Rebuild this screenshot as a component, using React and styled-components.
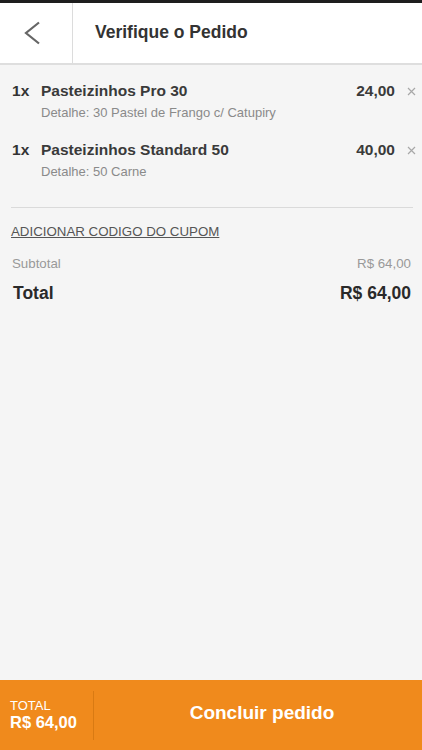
import styled, { createGlobalStyle } from 'styled-components'

const items = [
   { id: 1, qty: 1, name: 'Pasteizinhos Pro 30', detail: 'Detalhe: 30 Pastel de Frango c/ Catupiry', price: '24,00' },
   { id: 2, qty: 1, name: 'Pasteizinhos Standard 50', detail: 'Detalhe: 50 Carne', price: '40,00' },
]

export default function App() {
   return <Page>
      <Global />
      <TopStrip />
      <Header>
         <BackButton aria-label="Voltar">
            <svg width="18" height="24" viewBox="0 0 18 24">
               <polyline points="15,1.5 2,12 15,22.5" fill="none" stroke="#666" strokeWidth="2.2" />
            </svg>
         </BackButton>
         <Title>Verifique o Pedido</Title>
      </Header>

      <Content>
         <ItemList>
            {items.map((item) => (
               <Item key={item.id}>
                  <Qty>{item.qty}x</Qty>
                  <Info>
                     <Name>{item.name}</Name>
                     <Detail>{item.detail}</Detail>
                  </Info>
                  <Price>{item.price}</Price>
                  <Remove aria-label="Remover">
                     <svg width="9" height="9" viewBox="0 0 9 9">
                        <path d="M1 1 L8 8 M8 1 L1 8" stroke="#a8a8a8" strokeWidth="1.2" />
                     </svg>
                  </Remove>
               </Item>
            ))}
         </ItemList>

         <Separator />

         <CouponLink href="#">ADICIONAR CODIGO DO CUPOM</CouponLink>

         <SummaryRow>
            <span>Subtotal</span>
            <span>R$ 64,00</span>
         </SummaryRow>
         <SummaryRow $total>
            <span>Total</span>
            <span>R$ 64,00</span>
         </SummaryRow>
      </Content>

      <Footer>
         <FooterTotal>
            <small>TOTAL</small>
            <strong>R$ 64,00</strong>
         </FooterTotal>
         <FooterDivider />
         <ConfirmButton>Concluir pedido</ConfirmButton>
      </Footer>
   </Page>
}

const Global = createGlobalStyle`
   html, body {
      margin: 0;
      padding: 0;
      background: #f5f5f5;
   }
   * { box-sizing: border-box; }
`

const Page = styled.div`
   width: 422px;
   height: 750px;
   display: flex;
   flex-direction: column;
   background: #f5f5f5;
   font-family: "Liberation Sans", Arial, sans-serif;
   color: #333;
   overflow: hidden;`

const TopStrip = styled.div`
   height: 3px;
   background: #1e1e1e;`

const Header = styled.header`
   height: 62px;
   display: flex;
   align-items: stretch;
   background: #fff;
   border-bottom: 2px solid #dedede;`

const BackButton = styled.button`
   width: 73px;
   border: none;
   border-right: 1px solid #dcdcdc;
   background: transparent;
   display: flex;
   align-items: center;
   padding: 0 0 0 24px;`

const Title = styled.h1`
   margin: 0 0 0 22px;
   align-self: center;
   font-size: 17.5px;
   font-weight: bold;
   color: #333;
   padding-bottom: 2px;`

const Content = styled.main`
   flex: 1;
   padding: 0 6px 0 11px;
   display: flex;
   flex-direction: column;`

const ItemList = styled.div`
   display: flex;
   flex-direction: column;
   gap: 20px;
   padding-top: 17px;`

const Item = styled.div`
   display: flex;
   align-items: flex-start;`

const Qty = styled.span`
   width: 30px;
   padding-left: 1px;
   font-size: 15.5px;
   line-height: 18px;
   font-weight: bold;
   color: #333;`

const Info = styled.div`
   flex: 1;
   display: flex;
   flex-direction: column;
   gap: 5px;`

const Name = styled.span`
   font-size: 15.5px;
   line-height: 18px;
   font-weight: bold;
   color: #3a3a3a;`

const Detail = styled.span`
   font-size: 13px;
   line-height: 16px;
   color: #8a8a8a;`

const Price = styled.span`
   font-size: 15.5px;
   line-height: 18px;
   font-weight: bold;
   color: #3a3a3a;`

const Remove = styled.button`
   width: 21px;
   height: 18px;
   border: none;
   background: transparent;
   padding: 0 0 0 12px;
   display: flex;
   align-items: center;`

const Separator = styled.hr`
   margin: 27px 0 0 0;
   border: none;
   border-top: 1.5px solid #dadada;
   width: 402px;`

const CouponLink = styled.a`
   margin-top: 16px;
   font-size: 13.3px;
   line-height: 16px;
   color: #555;
   text-decoration: underline;
   align-self: flex-start;`

const SummaryRow = styled.div`
   display: flex;
   justify-content: space-between;
   padding: 0 5px 0 ${(p) => (p.$total ? '2px' : '1px')};
   margin-top: ${(p) => (p.$total ? '10px' : '16px')};
   font-size: ${(p) => (p.$total ? '17.5px' : '13.3px')};
   line-height: ${(p) => (p.$total ? '22px' : '16px')};
   font-weight: ${(p) => (p.$total ? 'bold' : 'normal')};
   color: ${(p) => (p.$total ? '#2a2a2a' : '#999')};`

const Footer = styled.footer`
   height: 70px;
   display: flex;
   align-items: center;
   background: #f08a1c;
   color: #fff;`

const FooterTotal = styled.div`
   width: 93px;
   padding-left: 10px;
   display: flex;
   flex-direction: column;

   small {
      font-size: 13px;
      line-height: 14px;
   }

   strong {
      font-size: 16.5px;
      line-height: 18px;
   }`

const FooterDivider = styled.div`
   width: 1px;
   height: 49px;
   background: #d97a12;`

const ConfirmButton = styled.button`
   flex: 1;
   height: 100%;
   border: none;
   background: transparent;
   color: #fff;
   font-family: inherit;
   font-size: 19px;
   font-weight: bold;
   padding: 0 0 4px 8px;`
